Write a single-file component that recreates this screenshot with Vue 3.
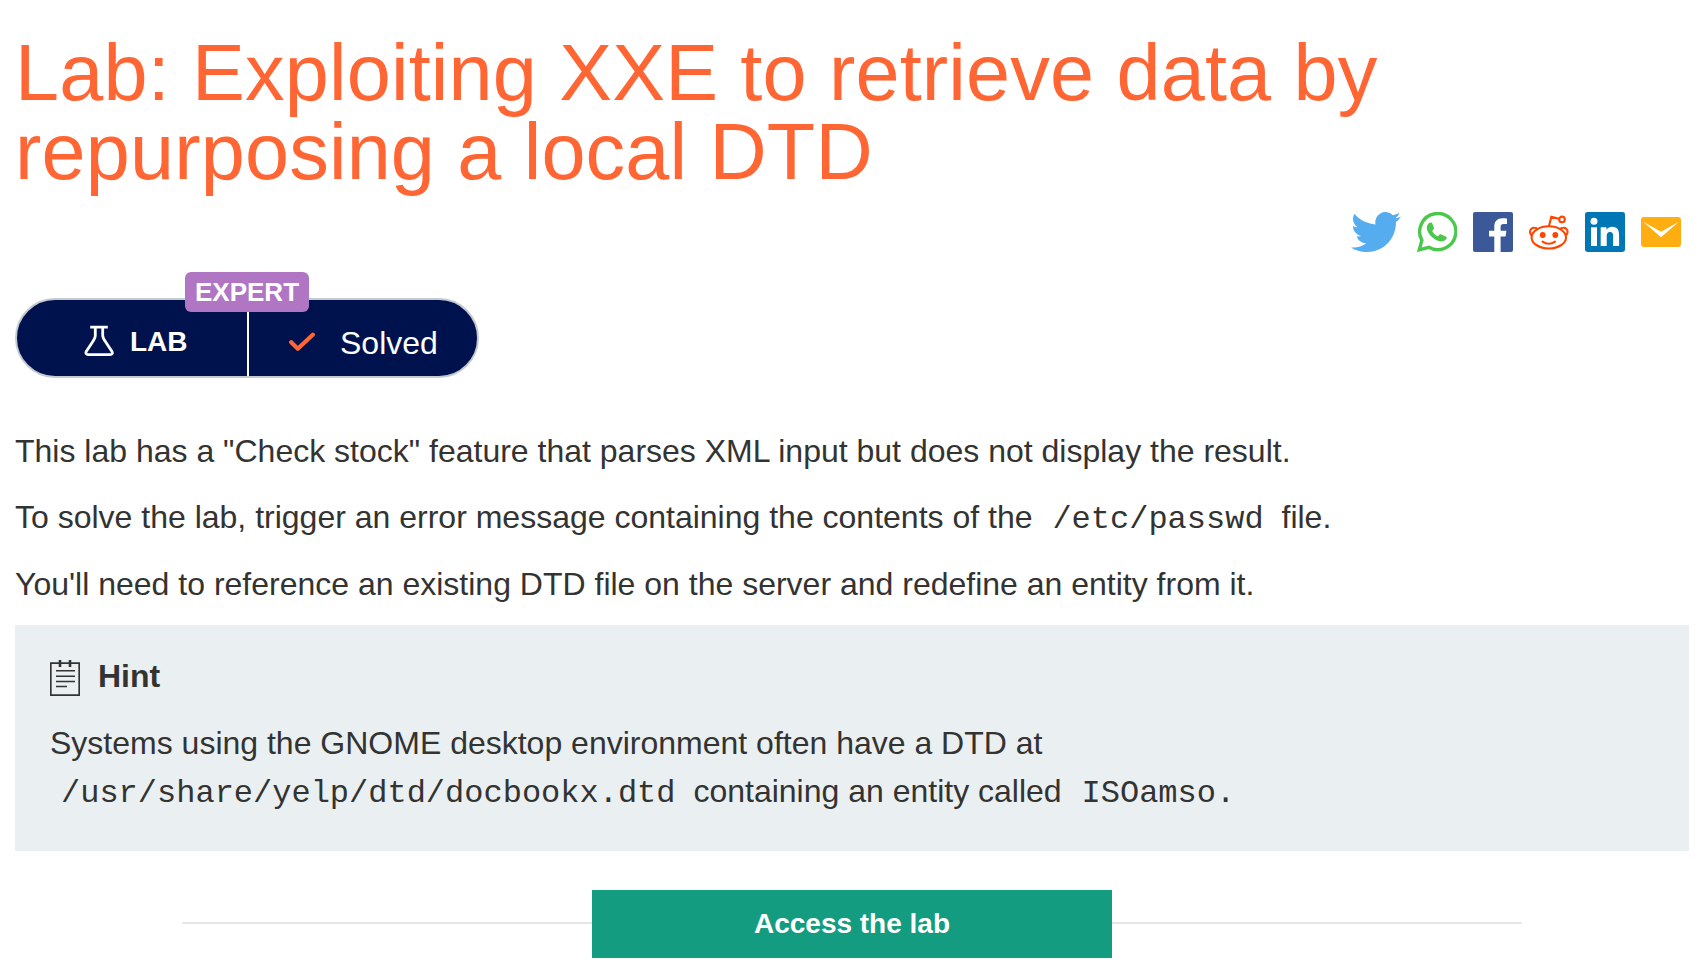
<script setup>
const socials = ['twitter', 'whatsapp', 'facebook', 'reddit', 'linkedin', 'email']
</script>

<template>
  <main class="page">
    <h1>Lab: Exploiting XXE to retrieve data by<br />repurposing a local DTD</h1>

    <div class="socials">
      <a v-for="s in socials" :key="s" :class="['social', s]">
        <svg v-if="s === 'twitter'" width="50" height="40" viewBox="0 2.25 24 19.5" preserveAspectRatio="none" fill="#55acee">
          <path d="M23.953 4.57a10 10 0 01-2.825.775 4.958 4.958 0 002.163-2.723c-.951.555-2.005.959-3.127 1.184a4.92 4.92 0 00-8.384 4.482C7.69 8.095 4.067 6.13 1.64 3.162a4.822 4.822 0 00-.666 2.475c0 1.71.87 3.213 2.188 4.096a4.904 4.904 0 01-2.228-.616v.06a4.923 4.923 0 003.946 4.827 4.996 4.996 0 01-2.212.085 4.936 4.936 0 004.604 3.417 9.867 9.867 0 01-6.102 2.105c-.39 0-.779-.023-1.17-.067a13.995 13.995 0 007.557 2.209c9.053 0 13.998-7.496 13.998-13.985 0-.21 0-.42-.015-.63A9.935 9.935 0 0024 4.59z" />
        </svg>
        <svg v-else-if="s === 'whatsapp'" width="40" height="40" viewBox="0 0 40 40">
          <path d="M2.3 37.8L4.9 28.3A18.1 18.1 0 1 1 11.8 35.3Z" fill="none" stroke="#4bc84b" stroke-width="3.4" />
          <path d="M13 10.7C14.6 10.4 15.1 10.9 15.5 11.9L16.9 15.4C17.4 16.9 15.9 17.9 15.2 18.9C16.4 21.2 18.2 23.2 20.9 24.3C21.8 23.4 22.5 21.9 23.8 22.3L29.2 24.8C30.7 25.6 28.8 28.1 27.2 28.8C24.5 30.2 20.5 29 17.4 27.1C13.8 24.7 9.7 19.7 9.8 15.6C9.8 13.3 11.2 11 13 10.7Z" fill="#4bc84b" />
        </svg>
        <svg v-else-if="s === 'facebook'" width="40" height="40" viewBox="0 0 40 40">
          <rect width="40" height="40" rx="2" fill="#3b5998" />
          <path d="M21.3 40V24.5H16V18.8H21.3V14.5C21.3 9.2 24.5 6.2 29.4 6.2C31.4 6.2 33 6.3 34 6.5V12H30.8C28.2 12 27.6 13.2 27.6 15V18.8H33.4L32.6 24.5H27.6V40Z" fill="#fff" />
        </svg>
        <svg v-else-if="s === 'reddit'" width="40" height="40" viewBox="0 0 40 40" fill="none" stroke="#ff4500" stroke-width="2.1">
          <ellipse cx="19.8" cy="25.4" rx="17.2" ry="11.1" />
          <path d="M2.4 23.2C-.6 19.7 2 15.6 5.1 15.7C6.7 15.7 8 16.2 8.9 17.2M37.2 23.2C40.2 19.7 37.6 15.6 34.5 15.7C32.9 15.7 31.6 16.2 30.7 17.2M20 14L22.3 4.8L30 6.8" />
          <circle cx="33" cy="7.4" r="2.8" />
          <path d="M13.6 29.6Q19.8 34 26 29.6" stroke-linecap="round" />
          <circle cx="13.7" cy="23" r="2.9" fill="#ff4500" stroke="none" />
          <circle cx="26.3" cy="23" r="2.9" fill="#ff4500" stroke="none" />
        </svg>
        <svg v-else-if="s === 'linkedin'" width="40" height="40" viewBox="0 0 40 40">
          <rect width="40" height="40" rx="2.4" fill="#0077b5" />
          <circle cx="9" cy="9.2" r="3.5" fill="#fff" />
          <path d="M6 15.2H12V34H6ZM15.7 15.2H21.4V17.8C22.5 16 24.5 14.7 27.2 14.7C32.8 14.7 34.1 18.4 34.1 23.7V34H28.1V24.8C28.1 22.6 28 20 25 20C22.2 20 21.7 22.3 21.7 24.7V34H15.7Z" fill="#fff" />
        </svg>
        <svg v-else width="40" height="30" viewBox="0 0 40 30">
          <rect width="40" height="30" rx="3" fill="#ffae12" />
          <path d="M2.2 4.7L20 20.3L37.8 4.7L20 14.8Z" fill="#fff" />
        </svg>
      </a>
    </div>

    <div class="status">
      <span class="level">EXPERT</span>
      <div class="half lab">
        <svg width="30" height="32" viewBox="0 0 30 32" fill="none" stroke="#fff" stroke-width="2.8" stroke-linejoin="round">
          <path d="M6.2 2.2H23.8M11.3 2V10.5C11.3 13.3 9.5 15.6 7.7 18.2L2.4 26.3C1.3 28.2 2.1 29.6 4.2 29.6H26C28.2 29.6 28.9 28.2 27.8 26.3L22.5 18.2C20.7 15.6 18.7 13.3 18.7 10.5V2" />
        </svg>
        <b>LAB</b>
      </div>
      <div class="half solved">
        <svg width="26" height="20" viewBox="0 0 26 20" fill="none" stroke="#ff6633" stroke-width="4.2" stroke-linecap="round" stroke-linejoin="round">
          <path d="M2.2 10.3L8.8 16.8L23.8 2.7" />
        </svg>
        <span>Solved</span>
      </div>
    </div>

    <p class="first">This lab has a "Check stock" feature that parses XML input but does not display the result.</p>
    <p>To solve the lab, trigger an error message containing the contents of the <code>/etc/passwd</code> file.</p>
    <p>You'll need to reference an existing DTD file on the server and redefine an entity from it.</p>

    <section class="hint">
      <h2>
        <svg width="30" height="36" viewBox="0 0 30 36" fill="none" stroke="#333332">
          <path d="M.8 3.2H29.2V35.1H.8Z" stroke-width="1.7" />
          <path d="M10 0V7M20 0V7" stroke-width="2.6" />
          <path d="M6 10.8H25M6 16.2H25M6 21.4H25M6 26.6H17" stroke-width="1.5" />
        </svg>
        Hint
      </h2>
      <p>Systems using the GNOME desktop environment often have a DTD at<br /><code>/usr/share/yelp/dtd/docbookx.dtd</code> containing an entity called <code>ISOamso.</code></p>
    </section>

    <div class="access">
      <a class="button">Access the lab</a>
    </div>
  </main>
</template>

<style>
body {
  margin: 0;
  background: #fff;
}
</style>

<style scoped>
.page {
  box-sizing: border-box;
  height: 974px;
  overflow: hidden;
  padding: 33px 15px 0;
  color: #333332;
  font: 32px/48px "Liberation Sans", Arial, sans-serif;
}
h1 {
  margin: 0;
  color: #ff6633;
  font-size: 79.2px;
  letter-spacing: 0.17px;
  line-height: 79px;
  font-weight: 400;
  white-space: nowrap;
}
.socials {
  display: flex;
  justify-content: flex-end;
  align-items: center;
  gap: 16px;
  height: 40px;
  margin: 21px 8px 0 0;
}
.social {
  display: block;
}
svg {
  display: block;
  flex: none;
}
.status {
  position: relative;
  display: flex;
  box-sizing: border-box;
  width: 464px;
  height: 80px;
  margin-top: 46px;
  border: 2px solid #c5cace;
  border-radius: 40px;
  background: #00124e;
  color: #fff;
}
.level {
  position: absolute;
  top: -28px;
  left: 168px;
  width: 124px;
  height: 40px;
  border-radius: 6px;
  background: #b076c4;
  font-size: 26px;
  font-weight: 700;
  line-height: 40px;
  text-align: center;
}
.half {
  display: flex;
  box-sizing: border-box;
  height: 76px;
}
.lab {
  width: 232px;
  padding: 25px 0 0 67px;
  gap: 16px;
  border-right: 2px solid #fff;
}
.lab b {
  font-size: 28px;
  line-height: 34px;
}
.solved {
  padding: 32px 0 0 40px;
  gap: 25px;
}
.solved span {
  margin-top: -13px;
}
p {
  margin: 0 0 19px;
  white-space: nowrap;
}
.first {
  margin: 49px 0 18px;
}
code {
  margin: 0 9px 0 11px;
  font-family: "Liberation Mono", "Courier New", monospace;
  font-size: 32px;
  line-height: 0;
}
.hint {
  box-sizing: border-box;
  height: 226px;
  margin-top: -2px;
  padding: 27px 35px 0;
  background: #eaeff2;
}
.hint h2 {
  display: flex;
  gap: 18px;
  margin: 0 0 19px;
  font-size: 32px;
  line-height: 48px;
}
.hint h2 svg {
  margin-top: 8px;
}
.access {
  display: flex;
  align-items: center;
  margin: 39px 167px 0;
}
.access::before,
.access::after {
  content: "";
  flex: 1;
  height: 2px;
  margin-bottom: 2px;
  background: #e6e6e6;
}
.button {
  width: 520px;
  height: 68px;
  background: #149c80;
  color: #fff;
  font-size: 28px;
  font-weight: 700;
  line-height: 68px;
  text-align: center;
}
</style>
